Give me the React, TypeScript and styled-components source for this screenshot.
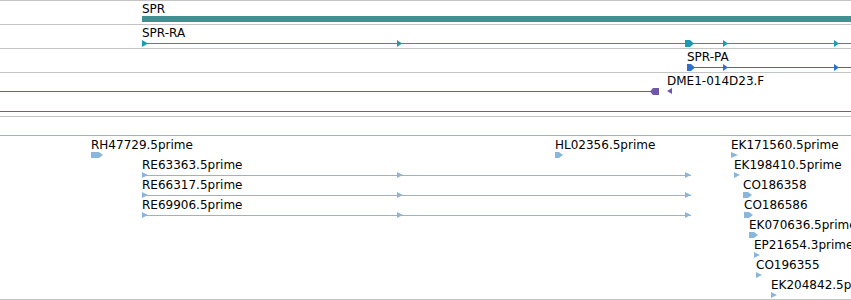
import React from "react";
import styled, { createGlobalStyle } from "styled-components";

const Global = createGlobalStyle`
  html, body { margin: 0; padding: 0; background: #ffffff; overflow: hidden; }
  body { font-family: "DejaVu Sans", Verdana, sans-serif; }
`;

const GRID = "#c4c4c4";
const TEAL = "#408f91";
const RA = "#1b9ab5";
const PA = "#2f6fd0";
const PURPLE = "#6f58a8";
const EST = "#8ab6dc";

type Part =
  | { k: "arrow"; at: number; s?: number }
  | { k: "larrow"; at: number; s?: number }
  | { k: "box"; at: number; w: number }
  | { k: "lbox"; at: number; w: number }
  | { k: "bar" };

type Feature = {
  x: number;
  w: number;
  label?: string;
  color: string;
  h?: number;
  noLine?: boolean;
  parts: Part[];
};

const Page = styled.div`
  width: 851px;
  height: 300px;
  overflow: hidden;
  display: flex;
  flex-direction: column;
  border-top: 1px solid ${GRID};
  box-sizing: border-box;
`;

const Track = styled.section<{ $pb?: number }>`
  display: flex;
  flex-direction: column;
  border-bottom: 1px solid ${GRID};
  padding-bottom: ${(p) => p.$pb ?? 0}px;
`;

const Lane = styled.div<{ $h: number }>`
  position: relative;
  height: ${(p) => p.$h}px;
`;

const FeatureBox = styled.div.attrs<{ $x: number; $w: number }>((p) => ({
  style: { left: p.$x, width: p.$w },
}))<{ $x: number; $w: number }>`
  position: absolute;
  top: 1px;
  display: flex;
  flex-direction: column;
`;

const Label = styled.div`
  height: 14px;
  font-family: "DejaVu Sans", Verdana, sans-serif;
  font-size: 12px;
  line-height: 14px;
  color: #000;
  white-space: nowrap;
`;

const GlyphSvg = styled.svg`
  display: block;
  overflow: visible;
`;

function Glyph({ f }: { f: Feature }) {
  const h = f.h ?? 7;
  const mid = 3;
  return (
    <GlyphSvg width={f.w} height={h}>
      {!f.noLine && (
        <rect x={0} y={mid} width={f.w} height={1} fill={f.color} shapeRendering="crispEdges" />
      )}
      {f.parts.map((p, i) => {
        if (p.k === "bar")
          return <rect key={i} x={0} y={0} width={f.w} height={6} fill={f.color} shapeRendering="crispEdges" />;
        if (p.k === "arrow") {
          const s = p.s ?? 6;
          return <polygon key={i} points={`${p.at},0 ${p.at + s},${h / 2} ${p.at},${h}`} fill={f.color} />;
        }
        if (p.k === "larrow") {
          const s = p.s ?? 5;
          return <polygon key={i} points={`${p.at + s},0 ${p.at},${h / 2} ${p.at + s},${h}`} fill={f.color} />;
        }
        if (p.k === "box") {
          const b = p.w - 4;
          return (
            <polygon
              key={i}
              points={`${p.at},0 ${p.at + b},0 ${p.at + p.w},${h / 2} ${p.at + b},${h} ${p.at},${h}`}
              fill={f.color}
            />
          );
        }
        const t = 3;
        return (
          <polygon
            key={i}
            points={`${p.at + t},0 ${p.at + p.w},0 ${p.at + p.w},${h} ${p.at + t},${h} ${p.at},${h / 2}`}
            fill={f.color}
          />
        );
      })}
    </GlyphSvg>
  );
}

function FeatureView({ f }: { f: Feature }) {
  return (
    <FeatureBox $x={f.x} $w={f.w}>
      <Label>{f.label ?? ""}</Label>
      <Glyph f={f} />
    </FeatureBox>
  );
}

function LaneView({ h, features }: { h: number; features: Feature[] }) {
  return (
    <Lane $h={h}>
      {features.map((f, i) => (
        <FeatureView key={i} f={f} />
      ))}
    </Lane>
  );
}

const estSpliced = (label: string): Feature => ({
  x: 142,
  w: 549,
  label,
  color: EST,
  h: 6,
  parts: [
    { k: "arrow", at: 0, s: 6 },
    { k: "arrow", at: 255, s: 6 },
    { k: "arrow", at: 543, s: 6 },
  ],
});

const estArrow = (x: number, label: string, s = 7): Feature => ({
  x,
  w: s,
  label,
  color: EST,
  h: 6,
  noLine: true,
  parts: [{ k: "arrow", at: 0, s }],
});

const estBox = (x: number, label: string, w: number): Feature => ({
  x,
  w,
  label,
  color: EST,
  h: 6,
  noLine: true,
  parts: [{ k: "box", at: 0, w }],
});

const geneLane: Feature[] = [
  { x: 142, w: 720, label: "SPR", color: TEAL, h: 6, noLine: true, parts: [{ k: "bar" }] },
];

const raLane: Feature[] = [
  {
    x: 142,
    w: 720,
    label: "SPR-RA",
    color: RA,
    parts: [
      { k: "arrow", at: 0, s: 6 },
      { k: "arrow", at: 255, s: 5 },
      { k: "box", at: 543, w: 9 },
      { k: "arrow", at: 581, s: 5 },
      { k: "arrow", at: 692, s: 5 },
    ],
  },
];

const paLane: Feature[] = [
  {
    x: 687,
    w: 180,
    label: "SPR-PA",
    color: PA,
    parts: [
      { k: "box", at: 0, w: 8 },
      { k: "arrow", at: 36, s: 5 },
      { k: "arrow", at: 147, s: 5 },
    ],
  },
];

const cloneLane1: Feature[] = [
  { x: -10, w: 669, color: PURPLE, parts: [{ k: "lbox", at: 660, w: 9 }] },
  {
    x: 667,
    w: 5,
    label: "DME1-014D23.F",
    color: PURPLE,
    h: 6,
    noLine: true,
    parts: [{ k: "larrow", at: 0, s: 5 }],
  },
];

const cloneLane2: Feature[] = [{ x: -10, w: 880, color: PURPLE, parts: [] }];

const estLanes: Feature[][] = [
  [{ x: -10, w: 880, color: EST, parts: [] }],
  [estBox(91, "RH47729.5prime", 12), estBox(555, "HL02356.5prime", 8), estArrow(731, "EK171560.5prime")],
  [estSpliced("RE63363.5prime"), estArrow(734, "EK198410.5prime", 6)],
  [estSpliced("RE66317.5prime"), estBox(743, "CO186358", 9)],
  [estSpliced("RE69906.5prime"), estBox(744, "CO186586", 9)],
  [estBox(749, "EK070636.5prime", 9)],
  [estArrow(754, "EP21654.3prime", 6)],
  [estArrow(756, "CO196355", 6)],
  [estArrow(771, "EK204842.5prime", 6)],
];

export default function App() {
  return (
    <>
      <Global />
      <Page>
        <Track>
          <LaneView h={23} features={geneLane} />
        </Track>
        <Track>
          <LaneView h={23} features={raLane} />
        </Track>
        <Track>
          <LaneView h={23} features={paLane} />
        </Track>
        <Track $pb={3}>
          <LaneView h={20} features={cloneLane1} />
          <LaneView h={20} features={cloneLane2} />
        </Track>
        <Track $pb={2}>
          {estLanes.map((lane, i) => (
            <LaneView key={i} h={20} features={lane} />
          ))}
        </Track>
      </Page>
    </>
  );
}
